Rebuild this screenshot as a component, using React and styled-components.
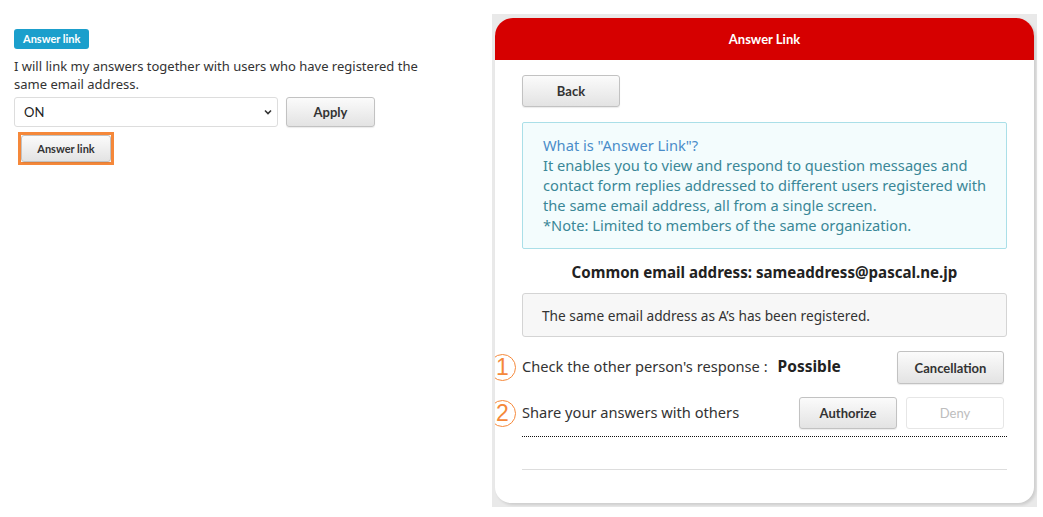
import React from "react";
import styled, { createGlobalStyle } from "styled-components";

const GlobalStyle = createGlobalStyle`
  body {
    margin: 0;
    background: #fff;
    font-family: "Noto Sans", "Open Sans", sans-serif;
    color: #333;
  }
`;

export default function App() {
  return (
    <>
      <GlobalStyle />
      <Page>
        <SettingColumn>
          <Badge>Answer link</Badge>
          <Lead>
            I will link my answers together with users who have registered the
            same email address.
          </Lead>
          <ControlRow>
            <SelectWrap>
              <Select defaultValue="ON">
                <option>ON</option>
                <option>OFF</option>
              </Select>
              <Chevron width="8" height="6" viewBox="0 0 8 6">
                <path d="M1 1.5 L4 4.5 L7 1.5" fill="none" stroke="#333" strokeWidth="1.6" />
              </Chevron>
            </SelectWrap>
            <Button width={89} height={30}>Apply</Button>
          </ControlRow>
          <Highlight>
            <Button width={90} height={27} small>Answer link</Button>
          </Highlight>
        </SettingColumn>

        <Frame>
          <Card>
            <Header>Answer Link</Header>
            <Body>
              <Button width={98} height={32}>Back</Button>
              <InfoBox>
                <InfoTitle>What is "Answer Link"?</InfoTitle>
                It enables you to view and respond to question messages and
                contact form replies addressed to different users registered with
                the same email address, all from a single screen.
                <br />
                *Note: Limited to members of the same organization.
              </InfoBox>
              <CommonEmail>Common email address: sameaddress@pascal.ne.jp</CommonEmail>
              <Notice>The same email address as A’s has been registered.</Notice>

              <StepRow top={14}>
                <StepNumber>1</StepNumber>
                <StepLabel>
                  Check the other person's response :
                  <Status>Possible</Status>
                </StepLabel>
                <Button width={107} height={33}>Cancellation</Button>
              </StepRow>
              <StepRow top={13}>
                <StepNumber>2</StepNumber>
                <StepLabel>Share your answers with others</StepLabel>
                <ButtonGroup>
                  <Button width={98} height={32}>Authorize</Button>
                  <Button width={98} height={32} disabled>Deny</Button>
                </ButtonGroup>
              </StepRow>
              <DottedRule />
              <Rule />
            </Body>
          </Card>
        </Frame>
      </Page>
    </>
  );
}

const Page = styled.div`
  display: flex;
  align-items: flex-start;
  padding-top: 14px;
`;

const SettingColumn = styled.div`
  width: 424px;
  padding: 15px 40px 0 14px;
  margin-right: 14px;
`;

const Badge = styled.span`
  display: block;
  width: fit-content;
  height: 20px;
  line-height: 20px;
  padding: 0 9px;
  border-radius: 3px;
  background: #1b9fcc;
  color: #fff;
  font-family: Lato, "Noto Sans", sans-serif;
  font-weight: 700;
  font-size: 11px;
`;

const Lead = styled.p`
  margin: 8px 0 4px;
  font-size: 13px;
  line-height: 18px;
  color: #333;
`;

const ControlRow = styled.div`
  display: flex;
  align-items: center;
  gap: 8px;
`;

const SelectWrap = styled.div`
  position: relative;
  width: 264px;
`;

const Select = styled.select`
  appearance: none;
  width: 100%;
  height: 30px;
  padding: 0 9px;
  border: 1px solid #ddd;
  border-radius: 3px;
  background: #fff;
  font-family: Lato, "Noto Sans", sans-serif;
  font-size: 13px;
  color: #222;
`;

const Chevron = styled.svg`
  position: absolute;
  right: 6px;
  top: 12px;
  pointer-events: none;
`;

const Highlight = styled.div`
  display: inline-flex;
  margin: 5px 0 0 4px;
  border: 3px solid #f5883a;
`;

const Button = styled.button`
  width: ${(p) => p.width}px;
  height: ${(p) => p.height}px;
  padding: 0;
  border: 1px solid ${(p) => (p.disabled ? "#e6e6e6" : "#c2c2c2")};
  border-radius: 3px;
  background: ${(p) =>
    p.disabled ? "#fff" : "linear-gradient(#fbfbfb, #e3e3e3)"};
  box-shadow: ${(p) => (p.disabled ? "none" : "0 1px 1px rgba(0, 0, 0, 0.08)")};
  color: ${(p) => (p.disabled ? "#bdbdbd" : "#333")};
  font-family: Lato, "Noto Sans", sans-serif;
  font-weight: ${(p) => (p.disabled ? 400 : 700)};
  font-size: ${(p) => (p.small ? 11 : 13)}px;
  flex-shrink: 0;
`;

const Frame = styled.div`
  width: 539px;
  height: 485px;
  padding: 4px 3px 4px 3px;
  background: #e9e9e9;
`;

const Card = styled.div`
  height: 100%;
  background: #fff;
  border-radius: 18px 18px 16px 16px;
  overflow: hidden;
  box-shadow: 2px 2px 3px rgba(0, 0, 0, 0.12);
`;

const Header = styled.div`
  height: 42px;
  display: flex;
  align-items: center;
  justify-content: center;
  background: #d60000;
  color: #fff;
  font-family: Lato, "Noto Sans", sans-serif;
  font-weight: 700;
  font-size: 13px;
`;

const Body = styled.div`
  display: flex;
  flex-direction: column;
  align-items: flex-start;
  padding: 15px 27px 0 27px;
`;

const InfoBox = styled.div`
  box-sizing: border-box;
  width: 100%;
  margin-top: 15px;
  padding: 12px 8px 13px 20px;
  border: 1px solid #aadfe8;
  border-radius: 2px;
  background: #f3fcfd;
  color: #3a8797;
  font-size: 14.65px;
  line-height: 20px;
`;

const InfoTitle = styled.div`
  color: #4a8cc9;
`;

const CommonEmail = styled.div`
  align-self: stretch;
  margin-top: 13px;
  text-align: center;
  font-weight: 700;
  font-size: 15.1px;
  line-height: 20px;
  color: #222;
`;

const Notice = styled.div`
  box-sizing: border-box;
  width: 100%;
  height: 44px;
  margin-top: 11px;
  padding: 0 19px;
  display: flex;
  align-items: center;
  border: 1px solid #d4d4d4;
  border-radius: 3px;
  background: #f7f7f7;
  font-size: 13.7px;
  color: #333;
`;

const StepRow = styled.div`
  align-self: stretch;
  display: flex;
  align-items: center;
  margin-top: ${(p) => p.top}px;
  margin-left: -33px;
  margin-right: 3px;
`;

const StepNumber = styled.span`
  box-sizing: border-box;
  width: 27px;
  height: 27px;
  margin-right: 6px;
  display: flex;
  align-items: center;
  justify-content: center;
  border: 1.3px solid #f5883a;
  border-radius: 50%;
  color: #f5883a;
  font-family: "Liberation Sans", sans-serif;
  font-size: 23px;
  line-height: 1;
  flex-shrink: 0;
`;

const StepLabel = styled.span`
  flex: 1;
  margin-top: -3px;
  font-size: 14.65px;
  color: #333;
`;

const Status = styled.b`
  margin-left: 10px;
  font-size: 15.5px;
  color: #222;
`;

const ButtonGroup = styled.div`
  display: flex;
  gap: 9px;
`;

const DottedRule = styled.hr`
  width: 100%;
  margin: 7px 0 0;
  border: none;
  border-top: 1px dotted #111;
`;

const Rule = styled.hr`
  width: 100%;
  margin: 32px 0 0;
  border: none;
  border-top: 1px solid #ddd;
`;
